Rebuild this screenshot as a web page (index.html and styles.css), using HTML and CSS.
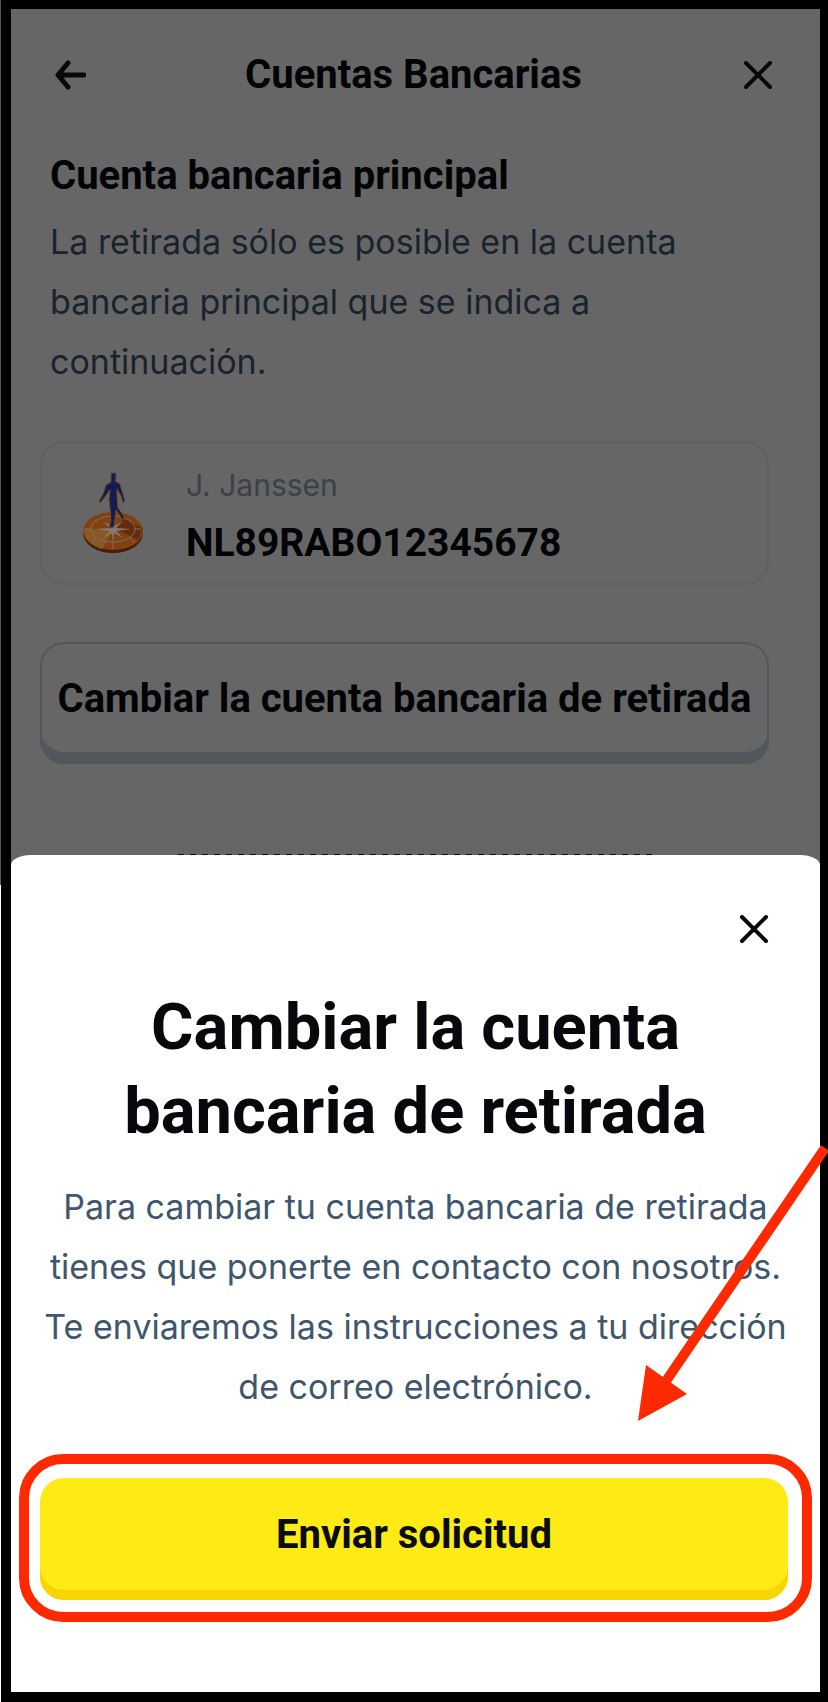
FILE: index.html
```html
<!DOCTYPE html>
<html lang="es">
<head>
    <meta charset="UTF-8">
    <meta name="viewport" content="width=device-width, initial-scale=1.0">
    <title>Cuentas Bancarias</title>
    <link rel="stylesheet" href="styles.css">
</head>
<body>
    <div class="screen">
        <main class="page">
            <header class="topbar">
                <button class="icon-btn icon-back" type="button" aria-label="Volver">
                    <svg width="34" height="34" viewBox="0 0 34 34"><path d="M16 5 6 17l10 12M6 17h26"/></svg>
                </button>
                <h1>Cuentas Bancarias</h1>
                <button class="icon-btn" type="button" aria-label="Cerrar">
                    <svg width="34" height="34" viewBox="0 0 34 34"><path d="M5 5l24 24M29 5 5 29"/></svg>
                </button>
            </header>

            <section class="account">
                <h2>Cuenta bancaria principal</h2>
                <p>La retirada sólo es posible en la cuenta bancaria principal que se indica a continuación.</p>

                <div class="card">
                    <svg class="bank-logo" width="62" height="82" viewBox="0 0 62 82">
                        <ellipse cx="31" cy="61" rx="30" ry="20" fill="#7a2e10"/>
                        <ellipse cx="31" cy="59" rx="30" ry="19" fill="#d96c1e"/>
                        <path d="M31 58 1 57C3 68 12 75 20 77z" fill="#e2953c"/>
                        <path d="M31 56 42 46l18 10-3 12z" fill="#a84719"/>
                        <ellipse cx="31" cy="57" rx="22" ry="13" fill="none" stroke="#d8b8a0" stroke-width="1"/>
                        <path d="M31 43l1 11 9-5-7 7 15 1-15 2 7 7-9-5-1 11-1-11-9 5 7-7-15-2 15-1-7-7 9 5z" fill="#dccabf"/>
                        <path d="M31 71v6M14 66l-4 5M48 66l4 5M9 57H3M53 57h6" stroke="#d8b8a0" stroke-width="1"/>
                        <path d="M29 1h5v6l-1 2 5 3 3 10 2 7-2 2-2-7-4-7 0 8 1 11 5 7 2 5-3-1-6-9-1 8-1 9-5 1 2-8-1-12-1-9 1-9-5 7-5 6-1-2 4-7 3-9 5-3z" fill="#202c8c" stroke="#c27a30" stroke-width="1"/>
                    </svg>
                    <div class="card-text">
                        <span class="owner">J. Janssen</span>
                        <strong class="iban">NL89RABO12345678</strong>
                    </div>
                </div>

                <button class="btn btn-outline" type="button">Cambiar la cuenta bancaria de retirada</button>
            </section>
            <div class="covered-row"></div>
        </main>

        <section class="sheet" role="dialog" aria-labelledby="sheet-title">
            <div class="sheet-top">
                <button class="icon-btn" type="button" aria-label="Cerrar">
                    <svg width="34" height="34" viewBox="0 0 34 34"><path d="M5 5l24 24M29 5 5 29"/></svg>
                </button>
            </div>
            <h2 id="sheet-title">Cambiar la cuenta<br>bancaria de retirada</h2>
            <p>Para cambiar tu cuenta bancaria de retirada tienes que ponerte en contacto con nosotros. Te enviaremos las instrucciones a tu dirección de correo electrónico.</p>
            <div class="highlight">
                <button class="btn btn-primary" type="button">Enviar solicitud</button>
                <svg class="arrow" width="190" height="276" viewBox="0 0 190 276">
                    <path d="M187 3 28 236" stroke="#ff2900" stroke-width="10"/>
                    <path d="M0 276 8 220 49 249z" fill="#ff2900"/>
                </svg>
            </div>
        </section>
    </div>
</body>
</html>
```
FILE: styles.css
```css
* {
    box-sizing: border-box;
}
body {
    margin: 0;
    padding-left: 1px;
    background: linear-gradient(#555 52%, #fff 52%);
    font-family: Inter, "Liberation Sans", sans-serif;
    font-size: 34px;
    line-height: 60px;
    color: #06080b;
}
h1, h2, p {
    margin: 0;
}
.screen {
    min-height: 100vh;
    display: flex;
    flex-direction: column;
    border: solid #000;
    border-width: 9px 8px 10px 10px;
    background: #666;
}
.page {
    flex: 1;
    display: flex;
    flex-direction: column;
    padding: 36px 51px 0 29px;
    color: #020305;
}
.topbar {
    display: flex;
    align-items: center;
    justify-content: space-between;
    margin-right: -6px;
    padding-left: 12px;
}
h1, h2, .btn, .iban {
    font-family: Roboto, "Liberation Sans", sans-serif;
    font-weight: 700;
}
h1 {
    font-size: 40px;
}
.icon-btn {
    display: flex;
    padding: 0;
    border: none;
    background: none;
    cursor: pointer;
}
.icon-btn svg {
    fill: none;
    stroke: #06080b;
    stroke-width: 4;
    stroke-linecap: round;
    stroke-linejoin: round;
}
.icon-back svg {
    stroke-width: 5;
}
.account h2 {
    margin: 41px 10px 6px;
    font-size: 40px;
}
.account p {
    margin: 0 10px;
    color: #19232d;
}
.card {
    display: flex;
    align-items: center;
    gap: 42px;
    margin: 49px 0 57px;
    padding: 12px 40px;
    border: 2px solid #5e6061;
    border-radius: 24px;
}
.bank-logo {
    filter: brightness(0.6);
}
.card-text {
    display: flex;
    flex-direction: column;
}
.owner {
    font-size: 30px;
    color: #3a4147;
}
.iban {
    font-size: 39px;
    line-height: 56px;
}
.btn {
    display: block;
    width: 100%;
    height: 122px;
    border: none;
    border-radius: 24px;
    font-size: 40px;
    cursor: pointer;
}
.btn-outline {
    padding: 0 0 10px;
    background: transparent;
    color: #020305;
    white-space: nowrap;
    box-shadow: inset 0 -12px #53575b, inset 0 0 0 2px #53575b;
}
/* tops of the letters that stick out above the sheet */
.covered-row {
    width: 474px;
    height: 1px;
    margin: auto auto 0 138px;
    background: repeating-linear-gradient(90deg, #0b0b0b 0 6px, transparent 6px 12px);
}
.sheet {
    padding: 57px 8px 70px;
    border-radius: 20px 20px 0 0 / 10px 10px 0 0;
    background: #fff;
    text-align: center;
}
.sheet-top {
    display: flex;
    justify-content: flex-end;
    padding-right: 41px;
}
.sheet h2 {
    margin: 39px 0 24px;
    font-size: 65px;
    line-height: 84px;
}
.sheet p {
    padding: 0 20px;
    color: #40566c;
}
.highlight {
    position: relative;
    margin-top: 37px;
    padding: 14px 14px 12px 11px;
    border: 10px solid #ff2900;
    border-radius: 44px;
}
.btn-primary {
    padding: 0 0 10px;
    background: #feea14;
    color: #0b0c0e;
    box-shadow: inset 0 -10px #f8d500;
}
/* callout arrow lies over the text and runs out past the sheet */
.arrow {
    position: absolute;
    right: -26px;
    bottom: 191px;
    pointer-events: none;
}
```
